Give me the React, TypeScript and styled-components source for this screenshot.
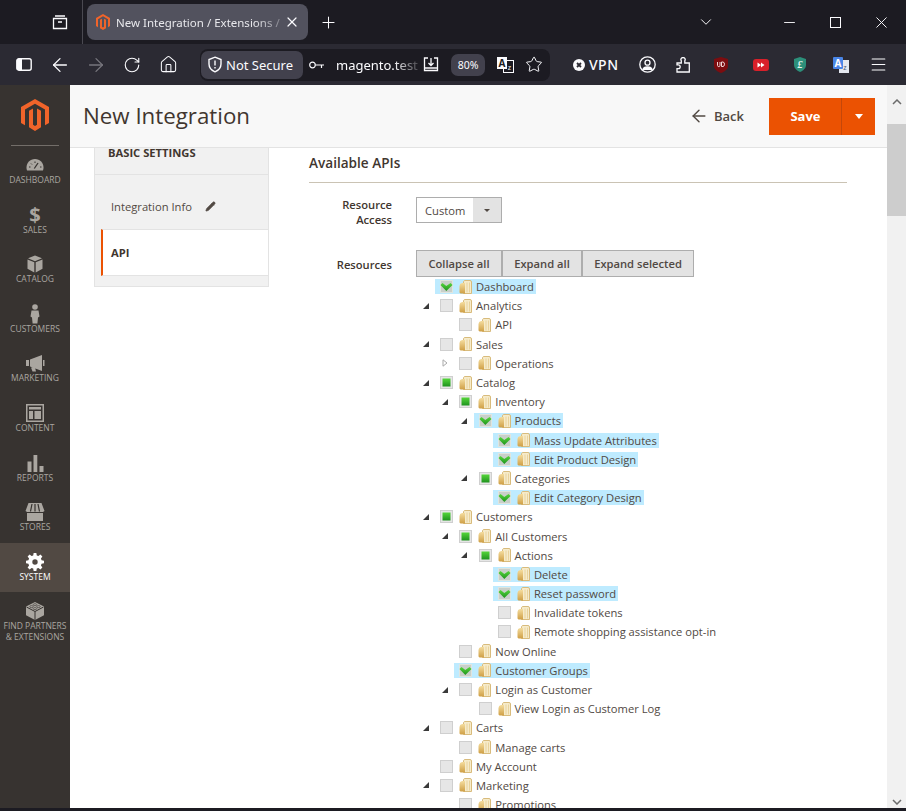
import styled, { createGlobalStyle } from "styled-components";
import { ArrowLeft, ArrowRight, ChevronDown, House, Menu, Minus, Pencil, Plus, RotateCw, Star, X } from "lucide-react";
import type { ReactNode } from "react";

const GlobalStyle = createGlobalStyle`
  html, body {
    margin: 0;
    height: 811px;
    overflow: hidden;
    background: #fff;
  }
  * { box-sizing: border-box; }
`;

const Window = styled.div`
  width: 906px;
  height: 811px;
  display: flex;
  flex-direction: column;
  font-family: "Open Sans", sans-serif;
  overflow: hidden;
`;

const TabBar = styled.div`
  height: 44px;
  flex: none;
  display: flex;
  align-items: center;
  background: #1c1b22;
  color: #fbfbfe;
`;

const TabsButton = styled.div`
  width: 83px;
  height: 44px;
  padding-left: 52px;
  display: flex;
  align-items: center;
  border-right: 1px solid #4a4951;
`;

const Tab = styled.div`
  width: 221px;
  height: 36px;
  margin-left: 4px;
  padding: 0 8px 0 9px;
  display: flex;
  align-items: center;
  background: #52525e;
  border-radius: 8px;
  font-family: "Noto Sans", sans-serif;
  font-size: 11.5px;
  white-space: nowrap;
`;

const TabTitle = styled.span`
  flex: 1;
  margin-left: 6px;
  overflow: hidden;
  color: #e8e8ec;
  -webkit-mask-image: linear-gradient(to right, #000 82%, rgba(0, 0, 0, 0.25));
  mask-image: linear-gradient(to right, #000 82%, rgba(0, 0, 0, 0.25));
`;

const NewTab = styled.div`
  margin-left: 11px;
  display: flex;
`;

const WindowControls = styled.div`
  margin-left: auto;
  padding-right: 2px;
  display: flex;
  align-items: center;
`;

const ControlSlot = styled.div<{ $gap?: number }>`
  width: 46px;
  margin-left: ${(p) => p.$gap ?? 0}px;
  display: flex;
  justify-content: center;
`;

const ToolBar = styled.div`
  height: 41px;
  flex: none;
  padding-left: 6px;
  display: flex;
  align-items: center;
  background: #2b2a33;
  color: #fbfbfe;
`;

const ToolSlot = styled.div<{ $w?: number; $dim?: boolean; $gap?: number }>`
  width: ${(p) => p.$w ?? 36}px;
  margin-left: ${(p) => p.$gap ?? 0}px;
  flex: none;
  display: flex;
  justify-content: center;
  align-items: center;
  color: ${(p) => (p.$dim ? "#77767d" : "#fbfbfe")};
`;

const UrlBar = styled.div`
  width: 350px;
  height: 32px;
  margin-left: 14px;
  padding: 1px;
  display: flex;
  align-items: center;
  background: #1c1b22;
  border-radius: 8px;
`;

const SecurePill = styled.div`
  width: 102px;
  height: 28px;
  padding-left: 6px;
  display: flex;
  align-items: center;
  gap: 3px;
  background: #42414d;
  border-radius: 7px;
  font-family: "Noto Sans", sans-serif;
  font-size: 13px;
`;

const UrlText = styled.div`
  width: 85px;
  margin: 0 -5px 0 5px;
  white-space: nowrap;
  font-family: "Noto Sans", sans-serif;
  font-size: 13px;
  -webkit-mask-image: linear-gradient(to right, #000 68%, rgba(0, 0, 0, 0.25) 94%);
  mask-image: linear-gradient(to right, #000 68%, rgba(0, 0, 0, 0.25) 94%);
`;

const ZoomPill = styled.div`
  width: 34px;
  height: 22px;
  margin-left: 5px;
  display: flex;
  align-items: center;
  justify-content: center;
  background: #42414d;
  border-radius: 7px;
  font-family: "Noto Sans", sans-serif;
  font-size: 10.5px;
`;

const Vpn = styled.div`
  width: 48px;
  margin-left: 23px;
  display: flex;
  align-items: center;
  gap: 4px;
  font-family: "Noto Sans", sans-serif;
  font-size: 14px;
  font-weight: 500;
  letter-spacing: 0.5px;
`;

const Page = styled.div`
  flex: 1;
  min-height: 0;
  display: flex;
  overflow: hidden;
`;

const BottomStrip = styled.div`
  height: 3px;
  flex: none;
  background: #1c1b22;
`;

const Sidebar = styled.nav`
  width: 70px;
  flex: none;
  background: #373330;
`;

const LogoBox = styled.div`
  height: 61px;
  margin: 0 11px;
  display: flex;
  justify-content: center;
  align-items: center;
  border-bottom: 1px solid #736e69;
`;

const NavItem = styled.div<{ $active?: boolean }>`
  height: 49.6px;
  padding-top: 10px;
  display: flex;
  flex-direction: column;
  align-items: center;
  background: ${(p) => (p.$active ? "#514943" : "transparent")};
  color: ${(p) => (p.$active ? "#fff" : "#aaa6a0")};
  font-size: 8.5px;
  line-height: 11px;
  text-align: center;
  white-space: pre-line;
`;

const NavIconBox = styled.div`
  height: 18px;
  flex: none;
  display: flex;
  align-items: center;
  justify-content: center;
`;

const DollarGlyph = styled.span`
  font-size: 20px;
  font-weight: 700;
  line-height: 18px;
`;

const Main = styled.div`
  flex: 1;
  min-width: 0;
  display: flex;
  flex-direction: column;
`;

const Header = styled.header`
  height: 63px;
  flex: none;
  padding: 0 12px 0 13px;
  display: flex;
  align-items: center;
  background: #f8f8f8;
  border-bottom: 1px solid #e3e3e3;
`;

const Title = styled.h1`
  margin: 0 0 2px;
  flex: 1;
  color: #41362f;
  font-size: 22.3px;
  font-weight: 400;
`;

const BackLink = styled.div`
  display: flex;
  align-items: center;
  gap: 5px;
  margin-right: 25px;
  color: #514943;
  font-size: 13px;
  font-weight: 600;
`;

const SaveGroup = styled.div`
  height: 37px;
  display: flex;
  background: #eb5202;
  color: #fff;
  font-size: 13px;
  font-weight: 700;
`;

const SaveLabel = styled.div`
  width: 73px;
  padding-left: 1px;
  display: flex;
  align-items: center;
  justify-content: center;
  border-right: 1px solid #c4470a;
`;

const SaveCaret = styled.div`
  width: 33px;
  display: flex;
  align-items: center;
  justify-content: center;
`;

const Caret = styled.i<{ $size: number; $color: string }>`
  width: 0;
  height: 0;
  border-left: ${(p) => p.$size}px solid transparent;
  border-right: ${(p) => p.$size}px solid transparent;
  border-top: ${(p) => p.$size * 1.3}px solid ${(p) => p.$color};
`;

const Body = styled.div`
  flex: 1;
  min-height: 0;
  display: flex;
  overflow: hidden;
`;

const SidePanel = styled.aside`
  width: 175px;
  height: 139px;
  flex: none;
  margin-left: 24px;
  padding-left: 6px;
  background: #f1f1f1;
  border: 1px solid #e3e3e3;
  border-top: 0;
  color: #41362f;
  font-size: 11.2px;
`;

const PanelTitle = styled.div`
  height: 27px;
  margin-left: -6px;
  padding: 0 0 15px 13px;
  display: flex;
  align-items: flex-end;
  border-bottom: 1px solid #e3e3e3;
  font-weight: 700;
  line-height: 12px;
`;

const PanelLink = styled.div`
  height: 54px;
  padding: 9px 0 0 10px;
  display: flex;
  align-items: center;
  gap: 13px;
  color: #514943;
`;

const PanelActive = styled.div`
  height: 47px;
  padding-left: 8px;
  display: flex;
  align-items: center;
  background: #fff;
  border-left: 2px solid #eb5202;
  border-top: 1px solid #e3e3e3;
  border-bottom: 1px solid #e3e3e3;
  font-weight: 700;
`;

const Content = styled.main`
  flex: 1;
  min-width: 0;
  margin: 0 40px;
  color: #41362f;
  font-size: 11.2px;
`;

const SectionTitle = styled.h2`
  margin: 0;
  height: 35px;
  padding-top: 6px;
  border-bottom: 1px solid #cac3b4;
  font-size: 13.6px;
  line-height: 18px;
  font-weight: 600;
`;

const FieldRow = styled.div<{ $top: number }>`
  margin-top: ${(p) => p.$top}px;
  display: flex;
  align-items: flex-start;
`;

const FieldLabel = styled.label<{ $pad?: number }>`
  width: 83px;
  margin-right: 24px;
  padding-top: ${(p) => p.$pad ?? 0}px;
  text-align: right;
  color: #41362f;
  font-weight: 600;
  line-height: 15px;
`;

const SelectBox = styled.div`
  width: 86px;
  height: 26px;
  display: flex;
  background: #fff;
  border: 1px solid #adadad;
  color: #514943;
`;

const SelectValue = styled.div`
  flex: 1;
  padding-left: 8px;
  display: flex;
  align-items: center;
`;

const SelectCaret = styled.div`
  width: 28px;
  display: flex;
  align-items: center;
  justify-content: center;
  background: #e3e3e3;
`;

const ButtonRow = styled.div`
  display: flex;
`;

const TreeButton = styled.div<{ $w: number }>`
  width: ${(p) => p.$w}px;
  height: 27px;
  display: flex;
  align-items: center;
  justify-content: center;
  background: #e3e3e3;
  border: 1px solid #adadad;
  color: #514943;
  font-weight: 600;
`;

const ResourceColumn = styled.div`
  flex: none;
`;

const TreeRoot = styled.ul`
  margin: 0;
  padding: 0;
  list-style: none;
  color: #514943;
`;

const Branch = styled.ul`
  margin: 0;
  padding: 0 0 0 19.3px;
  list-style: none;
`;

const RowLine = styled.div`
  height: 19.2px;
  display: flex;
  align-items: center;
`;

const Toggle = styled.div`
  width: 19px;
  height: 15px;
  flex: none;
  display: flex;
  align-items: center;
  justify-content: center;
`;

const Anchor = styled.div<{ $selected: boolean }>`
  height: 15px;
  padding: 0 2px 0 5px;
  display: flex;
  align-items: center;
  white-space: nowrap;
  background: ${(p) => (p.$selected ? "#beebff" : "transparent")};
  svg {
    flex: none;
  }
`;

const NodeLabel = styled.span`
  margin-left: 4px;
`;

const FolderSlot = styled.span`
  margin-left: 6px;
  display: flex;
`;

const Scrollbar = styled.div`
  width: 19px;
  flex: none;
  display: flex;
  flex-direction: column;
  align-items: center;
  background: #f1f1f1;
  color: #6b6b6b;
`;

const ScrollArrow = styled.div`
  height: 39px;
  padding-top: 3px;
`;

const ScrollThumb = styled.div`
  width: 100%;
  height: 92px;
  background: #cdcdcd;
`;

const ScrollArrowDown = styled.div`
  margin-top: auto;
  padding-bottom: 3px;
  display: flex;
`;

type CheckState = "none" | "partial" | "checked";

type TreeNode = {
  label: string;
  state: CheckState;
  closed?: boolean;
  children?: TreeNode[];
};

const tree: TreeNode[] = [
  { label: "Dashboard", state: "checked" },
  { label: "Analytics", state: "none", children: [{ label: "API", state: "none" }] },
  {
    label: "Sales",
    state: "none",
    children: [{ label: "Operations", state: "none", closed: true }],
  },
  {
    label: "Catalog",
    state: "partial",
    children: [
      {
        label: "Inventory",
        state: "partial",
        children: [
          {
            label: "Products",
            state: "checked",
            children: [
              { label: "Mass Update Attributes", state: "checked" },
              { label: "Edit Product Design", state: "checked" },
            ],
          },
          {
            label: "Categories",
            state: "partial",
            children: [{ label: "Edit Category Design", state: "checked" }],
          },
        ],
      },
    ],
  },
  {
    label: "Customers",
    state: "partial",
    children: [
      {
        label: "All Customers",
        state: "partial",
        children: [
          {
            label: "Actions",
            state: "partial",
            children: [
              { label: "Delete", state: "checked" },
              { label: "Reset password", state: "checked" },
              { label: "Invalidate tokens", state: "none" },
              { label: "Remote shopping assistance opt-in", state: "none" },
            ],
          },
        ],
      },
      { label: "Now Online", state: "none" },
      { label: "Customer Groups", state: "checked" },
      {
        label: "Login as Customer",
        state: "none",
        children: [{ label: "View Login as Customer Log", state: "none" }],
      },
    ],
  },
  { label: "Carts", state: "none", children: [{ label: "Manage carts", state: "none" }] },
  { label: "My Account", state: "none" },
  {
    label: "Marketing",
    state: "none",
    children: [{ label: "Promotions", state: "none" }],
  },
];

function MagentoLogo({ size }: { size: number }) {
  return (
    <svg width={size} height={(size * 32) / 28} viewBox="0 0 28 32" fill="#f1642a">
      <path d="M14 0 0 8v16l4 2.3V10.4l10-5.7 10 5.7v15.9l4-2.3V8z" />
      <path d="M12 9.4 8 11.7v16.6l6 3.7 6-3.7V11.7l-4-2.3v16.3l-2 1.2-2-1.2z" />
    </svg>
  );
}

function FolderIcon() {
  return (
    <svg width="13" height="14" viewBox="0 0 13 14">
      <defs>
        <linearGradient id="folderFront" x1="0" y1="0" x2="0" y2="1">
          <stop offset="0" stopColor="#f4dc9e" />
          <stop offset="1" stopColor="#cf9f45" />
        </linearGradient>
      </defs>
      <path d="M4.500 1.500Q5 .5 6 .5h5q1.500 0 1.500 1.500v11.500h-8z" fill="#f6ebca" stroke="#d8bb7c" />
      <path d="M.5 6Q.5 3.500 3 3h3v10.500H1.500l-1-1z" fill="url(#folderFront)" />
      <path d="M8 2.500v10M10.500 2.500v10" stroke="#e8d29c" />
    </svg>
  );
}

function CheckIcon({ state }: { state: CheckState }) {
  return (
    <svg width="13" height="13" viewBox="0 0 13 13">
      <defs>
        <linearGradient id="greenFill" x1="0" y1="0" x2="0" y2="1">
          <stop offset="0" stopColor="#55d63a" />
          <stop offset="1" stopColor="#1f931f" />
        </linearGradient>
      </defs>
      <rect
        x="0.500"
        y="0.500"
        width="12"
        height="12"
        fill={state === "checked" ? "#c9cfc9" : "#e6e6e6"}
        stroke={state === "checked" ? "#dfe5df" : "#cfcfcf"}
      />
      {state === "partial" && <rect x="2.500" y="2.500" width="8" height="8" fill="url(#greenFill)" />}
      {state === "checked" && <path d="M.5 5 2.500 3 6.300 6 10.500 3 12.500 5 6.300 11z" fill="url(#greenFill)" />}
    </svg>
  );
}

function ToggleIcon({ closed }: { closed?: boolean }) {
  if (closed) {
    return (
      <svg width="6" height="8" viewBox="0 0 6 8">
        <path d="M1 .8 5 4 1 7.200z" fill="#fff" stroke="#a9a9a9" />
      </svg>
    );
  }
  return (
    <svg width="6" height="6" viewBox="0 0 6 6">
      <path d="M6 0v6H0z" fill="#3a3a3a" />
    </svg>
  );
}

function TreeItem({ node }: { node: TreeNode }) {
  const hasChildren = !!node.children || node.closed;
  return (
    <li>
      <RowLine>
        <Toggle>{hasChildren && <ToggleIcon closed={node.closed} />}</Toggle>
        <Anchor $selected={node.state === "checked"}>
          <CheckIcon state={node.state} />
          <FolderSlot>
            <FolderIcon />
          </FolderSlot>
          <NodeLabel>{node.label}</NodeLabel>
        </Anchor>
      </RowLine>
      {node.children && (
        <Branch>
          {node.children.map((child) => (
            <TreeItem key={child.label} node={child} />
          ))}
        </Branch>
      )}
    </li>
  );
}

function NavSvg({ children, w = 20, h = 18 }: { children: ReactNode; w?: number; h?: number }) {
  return (
    <svg width={w} height={h} viewBox={`0 0 ${w} ${h}`} fill="currentColor">
      {children}
    </svg>
  );
}

const navItems: { label: string; icon: ReactNode; active?: boolean }[] = [
  {
    label: "DASHBOARD",
    icon: (
      <NavSvg>
        <path
          fill="currentColor"
          d="M10 3C5 3 1.500 6.800 1.500 11.500c0 1.300.3 2.400.6 3h15.800c.3-.6.6-1.700.6-3C18.500 6.800 15 3 10 3z"
        />
        <path d="M9.300 12.500 13 7" stroke="#373330" strokeWidth="1.300" />
        <path d="M4 11h1.500M6 7.500l1 1M10 5.500V7M15 11h1.500" stroke="#373330" />
      </NavSvg>
    ),
  },
  {
    label: "SALES",
    icon: <DollarGlyph>$</DollarGlyph>,
  },
  {
    label: "CATALOG",
    icon: (
      <NavSvg>
        <path d="M10 .5 3 3.300 10 6.200l7-2.900zM2.500 4.500v9.300l6.800 3.700V7.300zM17.500 4.500l-6.800 2.800v10.200l6.800-3.700z" />
      </NavSvg>
    ),
  },
  {
    label: "CUSTOMERS",
    icon: (
      <NavSvg h={20}>
        <circle cx="10" cy="3" r="2.800" />
        <path d="M6.500 6.500h7l1 6-1.500 1-.6 6H7.600l-.6-6-1.500-1z" />
      </NavSvg>
    ),
  },
  {
    label: "MARKETING",
    icon: (
      <NavSvg>
        <path d="M1 6h3v6H1zM5 5.500 17 1v16L5 12.500zM6 13.500h4l1 4H7.500zM18 6h1.500v6H18z" />
      </NavSvg>
    ),
  },
  {
    label: "CONTENT",
    icon: (
      <NavSvg>
        <path
          fillRule="evenodd"
          d="M1 0h18v18H1zm1.500 1.500v15h15v-15zm1.500 1.500h12v2.500H4zm0 4h4v8H4zm5.500 0H16v8H9.500z"
        />
        <path d="M10.500 9.500h4.500v1h-4.500z" />
      </NavSvg>
    ),
  },
  {
    label: "REPORTS",
    icon: (
      <NavSvg>
        <path d="M2.500 7.500h4V18h-4zM8.500 1h3.800v17H8.500zM14.500 12h4v6h-4z" />
      </NavSvg>
    ),
  },
  {
    label: "STORES",
    icon: (
      <NavSvg>
        <path d="M3.500 0h13L19.500 8l-1.500 1H2L.5 8zM2 10h16v8H2z" />
        <path d="M7 1 5.500 8.500M10 1v7.500M13 1l1.500 7.500" stroke="#373330" strokeWidth="1.200" />
      </NavSvg>
    ),
  },
  {
    label: "SYSTEM",
    active: true,
    icon: (
      <NavSvg>
        <path
          fillRule="evenodd"
          d="M8.500 0h3l.5 2.700 1.800.7L16 1.800l2.200 2.200-1.600 2.200.7 1.800L20 8.500v3l-2.700.5-.7 1.800 1.600 2.200-2.200 2.200-2.200-1.600-1.800.7-.5 2.700h-3L8 17.300l-1.800-.7L4 18.200 1.800 16l1.600-2.200-.7-1.800L0 11.500v-3L2.700 8l.7-1.800L1.800 4 4 1.800l2.200 1.600L8 2.700zM10 7a3 3 0 1 0 0 6 3 3 0 0 0 0-6z"
          transform="translate(1 0) scale(.9)"
        />
      </NavSvg>
    ),
  },
  {
    label: "FIND PARTNERS\n& EXTENSIONS",
    icon: (
      <NavSvg>
        <path d="M10 0 1 4.500v8.800L10 18l9-4.700V4.500z" />
        <path d="M1.500 5 10 9.500 18.500 5M10 9.500V18" fill="none" stroke="#373330" />
        <ellipse cx="6.500" cy="4.600" rx="1.800" ry="1" fill="none" stroke="#373330" strokeWidth=".6" />
        <ellipse cx="13.500" cy="4.600" rx="1.800" ry="1" fill="none" stroke="#373330" strokeWidth=".6" />
        <ellipse cx="10" cy="2.700" rx="1.800" ry="1" fill="none" stroke="#373330" strokeWidth=".6" />
        <ellipse cx="10" cy="6.600" rx="1.800" ry="1" fill="none" stroke="#373330" strokeWidth=".6" />
      </NavSvg>
    ),
  },
];

function App() {
  return (
    <>
      <GlobalStyle />
      <Window>
        <TabBar>
          <TabsButton>
            <svg width="16" height="15" viewBox="0 0 16 15" fill="none" stroke="#fbfbfe" strokeWidth="1.300">
              <path d="M3 1h10M1.500 3.500h13v10h-13zM6 7h4" />
            </svg>
          </TabsButton>
          <Tab>
            <MagentoLogo size={14} />
            <TabTitle>New Integration / Extensions /</TabTitle>
            <X size={16} strokeWidth={1.800} />
          </Tab>
          <NewTab>
            <Plus size={19} strokeWidth={1.300} />
          </NewTab>
          <WindowControls>
            <ControlSlot>
              <ChevronDown size={18} strokeWidth={1.300} />
            </ControlSlot>
            <ControlSlot $gap={37}>
              <Minus size={17} strokeWidth={1.300} />
            </ControlSlot>
            <ControlSlot>
              <svg width="11" height="11" viewBox="0 0 11 11">
                <rect x=".5" y=".5" width="10" height="10" fill="none" stroke="#fbfbfe" />
              </svg>
            </ControlSlot>
            <ControlSlot>
              <X size={19} strokeWidth={1.200} />
            </ControlSlot>
          </WindowControls>
        </TabBar>

        <ToolBar>
          <ToolSlot>
            <svg width="16" height="13" viewBox="0 0 16 13">
              <rect x=".8" y=".8" width="14.400" height="11.400" rx="2" fill="none" stroke="#fbfbfe" strokeWidth="1.400" />
              <rect x="1" y="1" width="5" height="11" fill="#fbfbfe" />
            </svg>
          </ToolSlot>
          <ToolSlot>
            <ArrowLeft size={22} strokeWidth={1.400} />
          </ToolSlot>
          <ToolSlot $dim>
            <ArrowRight size={22} strokeWidth={1.400} />
          </ToolSlot>
          <ToolSlot>
            <RotateCw size={18} strokeWidth={1.500} />
          </ToolSlot>
          <ToolSlot>
            <House size={19} strokeWidth={1.300} />
          </ToolSlot>
          <UrlBar>
            <SecurePill>
              <svg width="16" height="17" viewBox="0 0 16 17" fill="none" stroke="#fbfbfe" strokeWidth="1.400">
                <path d="M8 1.200 14 3.500V8c0 3.500-2.500 6.300-6 7.800C4.500 14.300 2 11.500 2 8V3.500z" />
                <path d="M8 4.500v5M8 11v1.500" />
              </svg>
              Not Secure
            </SecurePill>
            <ToolSlot $w={28}>
              <svg width="16" height="8" viewBox="0 0 16 8" fill="none" stroke="#fbfbfe" strokeWidth="1.200">
                <circle cx="3.500" cy="4" r="2.800" />
                <path d="M6.500 4H15M12.500 4v3" />
              </svg>
            </ToolSlot>
            <UrlText>magento.test</UrlText>
            <ToolSlot $w={30}>
              <svg width="16" height="15" viewBox="0 0 16 15" fill="none" stroke="#fbfbfe" strokeWidth="1.300">
                <path d="M5 1H1.500v12.500h13V1H11M8 1v7M5.500 6 8 8.500 10.500 6M1.500 11h13" />
              </svg>
            </ToolSlot>
            <ZoomPill>80%</ZoomPill>
            <ToolSlot $w={40}>
              <svg width="17" height="16" viewBox="0 0 17 16">
                <rect x="6.500" y="3.500" width="10" height="12" fill="#1c1b22" stroke="#fbfbfe" />
                <rect x="0" y="0" width="10" height="12" fill="#fbfbfe" />
                <text x="5" y="10" textAnchor="middle" fontSize="10" fontWeight="700" fontFamily="Noto Sans" fill="#1c1b22">
                  A
                </text>
                <text x="12.500" y="13" textAnchor="middle" fontSize="7" fontFamily="Noto Sans" fill="#fbfbfe">
                  z
                </text>
              </svg>
            </ToolSlot>
            <ToolSlot $w={18}>
              <Star size={19} strokeWidth={1.300} />
            </ToolSlot>
          </UrlBar>
          <Vpn>
            <svg width="12" height="12" viewBox="0 0 12 12">
              <circle cx="6" cy="6" r="6" fill="#fbfbfe" />
              <path d="M4 4l4 4M8 4l-4 4" stroke="#2b2a33" strokeWidth="1.800" />
            </svg>
            VPN
          </Vpn>
          <ToolSlot $gap={8}>
            <svg width="17" height="17" viewBox="0 0 17 17" fill="none" stroke="#fbfbfe" strokeWidth="1.300">
              <circle cx="8.500" cy="8.500" r="7.700" />
              <circle cx="8.500" cy="6.700" r="2.500" />
              <path d="M3.800 14c.5-2 2-3 4.700-3s4.200 1 4.700 3" fill="#fbfbfe" />
            </svg>
          </ToolSlot>
          <ToolSlot>
            <svg width="14" height="16" viewBox="0 0 14 16" fill="none" stroke="#fbfbfe" strokeWidth="1.300">
              <path d="M1 6h4.300V3.800a2.100 2.100 0 1 1 3.500 0V6h4.500v9H1v-3.300h1.300a1.900 1.900 0 0 0 0-3.800H1z" />
            </svg>
          </ToolSlot>
          <ToolSlot $w={40}>
            <svg width="14" height="16" viewBox="0 0 14 16">
              <path d="M7 0 14 2v7c0 3-3 5.500-7 7-4-1.500-7-4-7-7V2z" fill="#7c0d10" />
              <path d="M3.500 5v3.500c0 1.500 2.500 1.500 2.500 0V5M7.500 5v4.500H9c2 0 2-4.500 0-4.500z" fill="none" stroke="#f0d8d8" strokeWidth="1" />
            </svg>
          </ToolSlot>
          <ToolSlot $w={39}>
            <svg width="16" height="12" viewBox="0 0 16 12">
              <rect width="16" height="12" rx="3" fill="#d8202a" />
              <path d="M4.500 3.500 8 6l-3.500 2.500zM8 3.500 11.500 6 8 8.500z" fill="#fff" />
            </svg>
          </ToolSlot>
          <ToolSlot $w={39}>
            <svg width="12" height="15" viewBox="0 0 12 15">
              <path d="M6 0 12 2v6c0 3-2.500 5.500-6 7-3.500-1.500-6-4-6-7V2z" fill="#2c8f7a" />
              <text x="6" y="11" textAnchor="middle" fontSize="10" fontStyle="italic" fontWeight="700" fontFamily="Liberation Serif" fill="#e8f5ef">
                £
              </text>
            </svg>
          </ToolSlot>
          <ToolSlot $w={44}>
            <svg width="16" height="16" viewBox="0 0 16 16">
              <rect x="6" y="3" width="10" height="13" fill="#e4e7ef" />
              <rect width="10" height="12" rx="1" fill="#4a86e8" />
              <text x="5" y="10" textAnchor="middle" fontSize="10" fontWeight="700" fontFamily="Noto Sans" fill="#fff">
                A
              </text>
              <text x="12" y="13" textAnchor="middle" fontSize="7" fontFamily="Noto Sans" fill="#4a5a78">
                z
              </text>
            </svg>
          </ToolSlot>
          <ToolSlot $w={30}>
            <Menu size={19} strokeWidth={1.300} />
          </ToolSlot>
        </ToolBar>

        <Page>
          <Sidebar>
            <LogoBox>
              <MagentoLogo size={28} />
            </LogoBox>
            {navItems.map((item) => (
              <NavItem key={item.label} $active={item.active}>
                <NavIconBox>{item.icon}</NavIconBox>
                {item.label}
              </NavItem>
            ))}
          </Sidebar>

          <Main>
            <Header>
              <Title>New Integration</Title>
              <BackLink>
                <ArrowLeft size={20} strokeWidth={1.700} />
                Back
              </BackLink>
              <SaveGroup>
                <SaveLabel>Save</SaveLabel>
                <SaveCaret>
                  <Caret $size={4} $color="#fff" />
                </SaveCaret>
              </SaveGroup>
            </Header>
            <Body>
              <SidePanel>
                <PanelTitle>BASIC SETTINGS</PanelTitle>
                <PanelLink>
                  Integration Info
                  <Pencil size={11} fill="#514943" strokeWidth={1.500} />
                </PanelLink>
                <PanelActive>API</PanelActive>
              </SidePanel>
              <Content>
                <SectionTitle>Available APIs</SectionTitle>
                <FieldRow $top={14}>
                  <FieldLabel>
                    Resource
                    <br />
                    Access
                  </FieldLabel>
                  <SelectBox>
                    <SelectValue>Custom</SelectValue>
                    <SelectCaret>
                      <Caret $size={3} $color="#514943" />
                    </SelectCaret>
                  </SelectBox>
                </FieldRow>
                <FieldRow $top={23}>
                  <FieldLabel $pad={7}>Resources</FieldLabel>
                  <ResourceColumn>
                    <ButtonRow>
                      <TreeButton $w={86}>Collapse all</TreeButton>
                      <TreeButton $w={80}>Expand all</TreeButton>
                      <TreeButton $w={112}>Expand selected</TreeButton>
                    </ButtonRow>
                    <TreeRoot>
                      {tree.map((node) => (
                        <TreeItem key={node.label} node={node} />
                      ))}
                    </TreeRoot>
                  </ResourceColumn>
                </FieldRow>
              </Content>
            </Body>
          </Main>

          <Scrollbar>
            <ScrollArrow>
              <svg width="10" height="6" viewBox="0 0 10 6" fill="none" stroke="currentColor" strokeWidth="1.500">
                <path d="M1 5 5 1l4 4" />
              </svg>
            </ScrollArrow>
            <ScrollThumb />
            <ScrollArrowDown>
              <svg width="10" height="6" viewBox="0 0 10 6" fill="none" stroke="currentColor" strokeWidth="1.500">
                <path d="M1 1l4 4 4-4" />
              </svg>
            </ScrollArrowDown>
          </Scrollbar>
        </Page>
        <BottomStrip />
      </Window>
    </>
  );
}

export default App;
